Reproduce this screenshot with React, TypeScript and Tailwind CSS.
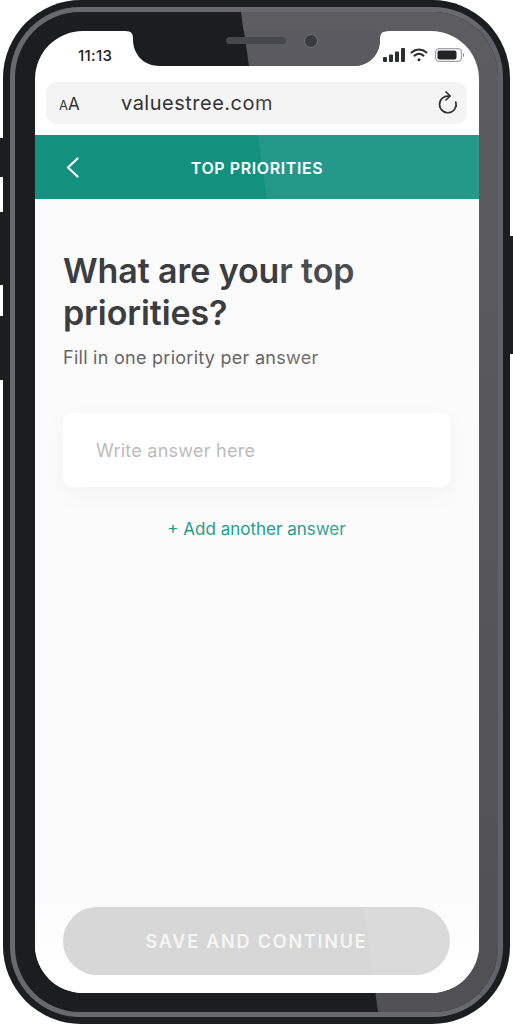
const FONT = "font-['Inter','Liberation_Sans',sans-serif]";

function SideButton({ className }: { className: string }) {
  return <div className={`absolute w-[6px] bg-[#1c1d21] ${className}`} />;
}

function Notch() {
  return (
    <svg className="absolute left-[90px] top-0" width="263" height="35" viewBox="0 0 263 35">
      <defs>
        <clipPath id="notch">
          <path d="M0 0 H263 C256 0 255 3 255 8 C255 24 244 35 228 35 H35 C19 35 8 24 8 8 C8 3 7 0 0 0 Z" />
        </clipPath>
      </defs>
      <g clipPath="url(#notch)">
        <rect width="263" height="35" fill="#1c1d21" />
        <polygon points="119,0 263,0 263,35 124,35" fill="#5a5a60" />
      </g>
      <rect x="101" y="6" width="60" height="7" rx="3.5" fill="#47484e" />
      <circle cx="186" cy="10" r="6.5" fill="#3a3b41" stroke="#77777c" strokeWidth="0.8" />
    </svg>
  );
}

function StatusIcons() {
  return (
    <div className="flex items-center gap-[5px]">
      <svg width="22" height="14" viewBox="0 0 22 14" fill="#1c1d21">
        <rect x="0" y="9" width="4" height="5" rx="1" />
        <rect x="6" y="6.5" width="4" height="7.5" rx="1" />
        <rect x="12" y="3.5" width="4" height="10.5" rx="1" />
        <rect x="18" y="0" width="4" height="14" rx="1" />
      </svg>
      <svg width="18" height="14" viewBox="0 0 18 14" fill="none" stroke="#1c1d21" strokeWidth="2" strokeLinecap="round">
        <path d="M1.5 4.5C6 0.5 12 0.5 16.5 4.5" />
        <path d="M4.5 7.6C7.2 5.4 10.8 5.4 13.5 7.6" />
        <circle cx="9" cy="11.8" r="1.5" fill="#1c1d21" stroke="none" />
      </svg>
      <svg className="ml-[2px]" width="30" height="14" viewBox="0 0 30 14">
        <rect x="0.6" y="0.6" width="25.8" height="12.8" rx="3.6" fill="none" stroke="#9a9a9a" strokeWidth="1.2" />
        <rect x="2.5" y="2.5" width="19" height="9" rx="2" fill="#111114" />
        <path d="M28 5 C29.2 5.4 29.2 8.6 28 9 Z" fill="#555" />
      </svg>
    </div>
  );
}

export default function App() {
  return (
    <div className={`relative h-[1024px] w-[513px] overflow-hidden bg-white ${FONT}`}>
      <SideButton className="left-0 top-[138px] h-[39px]" />
      <SideButton className="left-0 top-[212px] h-[73px]" />
      <SideButton className="left-0 top-[316px] h-[64px]" />
      <SideButton className="right-0 top-[236px] h-[118px]" />

      <div className="relative ml-[3px] h-[1024px] w-[507px] rounded-[78px] bg-[#1c1d21] pl-[32px] pt-[31px]">
        <div className="absolute inset-[7px] overflow-hidden rounded-[70px] border-[5px] border-[#68686e] border-r-[#616269]">
          <div className="absolute inset-0 bg-[linear-gradient(#5c5c61,#515155)] [clip-path:polygon(226px_0,100%_0,100%_100%,363px_100%)]" />
        </div>

        <div className="relative flex h-[962px] w-[444px] flex-col overflow-hidden rounded-[48px] bg-white">
          <div className="flex h-[51px] shrink-0 items-center justify-between pb-[3px] pl-[43px] pr-[14px]">
            <span className="text-[15px] font-medium leading-none tracking-[0.3px] text-[#222]">11:13</span>
            <StatusIcons />
          </div>

          <div className="ml-[11px] mr-[12px] flex h-[42px] shrink-0 items-center justify-between rounded-[11px] bg-[#f4f4f4] pl-[13px] pr-[9px]">
            <div className="flex items-baseline">
              <span className="w-[62px] leading-none text-[#333]">
                <span className="text-[13px]">A</span>
                <span className="text-[17px]">A</span>
              </span>
              <span className="text-[20px] leading-none tracking-[0.5px] text-[#333]">valuestree.com</span>
            </div>
            <svg width="20" height="24" viewBox="0 0 20 24" fill="none" stroke="#222" strokeWidth="1.7" strokeLinecap="round" strokeLinejoin="round">
              <path d="M11 5.2 A8.3 8.3 0 1 0 17.8 11" />
              <path d="M8 1 L12.2 5 L8 9" />
            </svg>
          </div>

          <div className="relative mt-[11px] flex h-[64px] shrink-0 items-center justify-center bg-[#13917f] pt-[1px]">
            <svg className="absolute left-[31px] top-[22px]" width="13" height="21" viewBox="0 0 13 21" fill="none" stroke="white" strokeWidth="2.2" strokeLinecap="round" strokeLinejoin="round">
              <path d="M11.5 1.5 L2 10.5 L11.5 19.5" />
            </svg>
            <span className="text-[16px] font-semibold tracking-[0.6px] text-white">TOP PRIORITIES</span>
          </div>

          <div className="flex min-h-0 flex-1 flex-col bg-[linear-gradient(#fbfbfb_88%,#ffffff_97%)] pb-[18px] pl-[28px] pr-[29px] pt-[51px]">
            <h1 className="text-[34px] font-semibold leading-[42px] tracking-[-0.1px] text-[#3c3d40]">
              What are your top
              <br />
              priorities?
            </h1>
            <p className="mt-[8px] text-[18px] leading-[32px] tracking-[0.27px] text-[#666]">Fill in one priority per answer</p>

            <div className="mt-[39px] flex h-[74px] items-center rounded-[9px] bg-white pl-[33px] shadow-[0_8px_24px_rgba(0,0,0,0.04)]">
              <span className="text-[18px] tracking-[0.25px] text-[#bbbbbb]">Write answer here</span>
            </div>

            <p className="mt-[29px] text-center text-[17px] leading-[26px] text-[#1f9d8c]">+ Add another answer</p>

            <div className="mt-auto flex h-[68px] shrink-0 items-center justify-center rounded-full bg-[#d7d7d7]">
              <span className="text-[18px] font-semibold tracking-[1.8px] text-[#f6f6f6]">SAVE AND CONTINUE</span>
            </div>
          </div>

          <div className="pointer-events-none absolute inset-0 bg-white/[0.08] [clip-path:polygon(209px_0,100%_0,100%_100%,340px_100%)]" />
          <Notch />
        </div>
      </div>
    </div>
  );
}
